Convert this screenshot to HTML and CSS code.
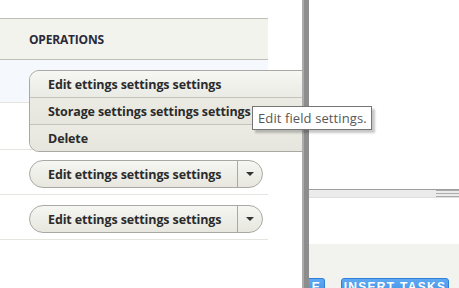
FILE: index.html
```html
<!DOCTYPE html>
<html>
<head>
<meta charset="utf-8">
<link rel="stylesheet" href="styles.css">
</head>
<body>
<div class="app">
  <div class="left">
    <div class="table">
      <div class="thead">OPERATIONS</div>
      <div class="row row-hover r1"></div>
      <div class="row r2"></div>
      <div class="row r3">
        <div class="btn"><span class="btn-main">Edit ettings settings settings</span><span class="btn-toggle"><span class="caret"></span></span></div>
      </div>
      <div class="row r4">
        <div class="btn"><span class="btn-main">Edit ettings settings settings</span><span class="btn-toggle"><span class="caret"></span></span></div>
      </div>
    </div>
    <ul class="dropdown">
      <li class="dd-item first">Edit ettings settings settings</li>
      <li class="dd-item">Storage settings settings settings</li>
      <li class="dd-item">Delete</li>
    </ul>
  </div>
  <div class="splitter"></div>
  <div class="right">
    <div class="hbar"><span class="grip"></span></div>
    <div class="rline"></div>
    <div class="actions">
      <span class="blue-btn small">E</span>
      <span class="blue-btn">INSERT TASKS</span>
    </div>
  </div>
</div>
<div class="tooltip">Edit field settings.</div>
</body>
</html>
```
FILE: styles.css
```css
html, body {
  margin: 0;
  padding: 0;
}
body {
  width: 459px;
  height: 288px;
  overflow: hidden;
  background: #fff;
  font-family: "Open Sans", "Noto Sans", sans-serif;
  color: #333;
  position: relative;
}
.app {
  display: flex;
  height: 288px;
}
.left {
  width: 302px;
  flex: none;
  position: relative;
  overflow: hidden;
}
.table {
  margin-top: 18px;
  width: 268px;
}
.thead {
  height: 42px;
  box-sizing: border-box;
  border-top: 1px solid #bfbfba;
  border-bottom: 1px solid #bfbfba;
  background: #f3f3ee;
  padding-left: 29px;
  display: flex;
  align-items: center;
  font-size: 12px;
  font-weight: bold;
  color: #2a2a3a;
  letter-spacing: -0.2px;
}
.row {
  border-bottom: 1px solid #e6e4df;
  box-sizing: border-box;
  padding-left: 29px;
}
.row-hover { background: #f5f9fd; }
.r1 { height: 43px; }
.r2 { height: 47px; }
.r3 { height: 45px; padding-top: 10px; }
.r4 { height: 45px; padding-top: 10px; }
.btn {
  display: flex;
  width: 234px;
  height: 28px;
  box-sizing: border-box;
  border: 1px solid #a8a8a4;
  border-radius: 14px;
  background: linear-gradient(#f6f6f2, #e7e7df);
  font-size: 12.5px;
  font-weight: bold;
  color: #2b2b2b;
}
.btn-main {
  flex: 1;
  padding-left: 18px;
  display: flex;
  align-items: center;
  letter-spacing: -0.12px;
}
.btn-toggle {
  width: 24px;
  border-left: 1px solid #a8a8a4;
  display: flex;
  align-items: center;
  justify-content: center;
}
.caret {
  width: 0;
  height: 0;
  border-left: 4px solid transparent;
  border-right: 4px solid transparent;
  border-top: 4px solid #333;
}
.dropdown {
  position: absolute;
  left: 29px;
  top: 70px;
  width: 300px;
  margin: 0;
  padding: 0;
  list-style: none;
  border: 1px solid #a8a8a4;
  border-radius: 10px 0 0 10px;
  overflow: hidden;
  background: #e8e8e0;
  font-size: 12.5px;
  font-weight: bold;
  letter-spacing: -0.12px;
  color: #2b2b2b;
}
.dd-item {
  height: 26px;
  display: flex;
  align-items: center;
  padding-left: 18px;
  border-top: 1px solid #c4c4bc;
  background: linear-gradient(#ebebe4, #e6e6de);
}
.dd-item.first {
  border-top: none;
  background: linear-gradient(#f6f6f2, #ebebe5);
}
.splitter {
  width: 7px;
  flex: none;
  box-sizing: border-box;
  border-left: 2px solid #ababab;
  background: #8d8d8d;
}
.right {
  flex: 1;
  display: flex;
  flex-direction: column;
  overflow: hidden;
}
.hbar {
  margin-top: 189px;
  height: 10px;
  box-sizing: border-box;
  border-top: 1px solid #9d9d9d;
  border-bottom: 1px solid #dedede;
  background: #ebebeb;
  display: flex;
  justify-content: flex-end;
  align-items: center;
}
.grip {
  width: 23px;
  height: 5px;
  border-top: 1px solid #acacac;
  border-bottom: 1px solid #acacac;
  background: linear-gradient(transparent 2px, #acacac 2px, #acacac 3px, transparent 3px);
}
.rline {
  margin-top: 37px;
  height: 1px;
  background: #e6e6e6;
}
.actions {
  margin-top: 9px;
  flex: 1;
  background: #f2f2ee;
  display: flex;
  align-items: flex-start;
  padding-top: 34px;
  gap: 16px;
}
.blue-btn {
  height: 20px;
  box-sizing: border-box;
  border: 1px solid #2f80d8;
  border-radius: 3px;
  background: linear-gradient(#5fa9f2, #3d8de0);
  color: #fff;
  font-family: "Liberation Sans", sans-serif;
  font-size: 12px;
  font-weight: bold;
  letter-spacing: 1.3px;
  padding: 1px 0 0 0;
  line-height: 14px;
  width: 108px;
  text-align: center;
  white-space: nowrap;
}
.blue-btn.small {
  width: 16px;
  border-left: none;
  border-radius: 0 3px 3px 0;
  overflow: hidden;
  text-align: right;
  padding-right: 3px;
  text-indent: -6px;
}
.tooltip {
  position: absolute;
  left: 252px;
  top: 106px;
  width: 120px;
  height: 24px;
  box-sizing: border-box;
  border: 1px solid #767676;
  background: #fff;
  box-shadow: 3px 3px 2px rgba(0,0,0,0.22);
  font-family: "Open Sans", sans-serif;
  font-size: 13px;
  color: #575757;
  padding-left: 5px;
  display: flex;
  align-items: center;
  letter-spacing: 0.1px;
}
```
